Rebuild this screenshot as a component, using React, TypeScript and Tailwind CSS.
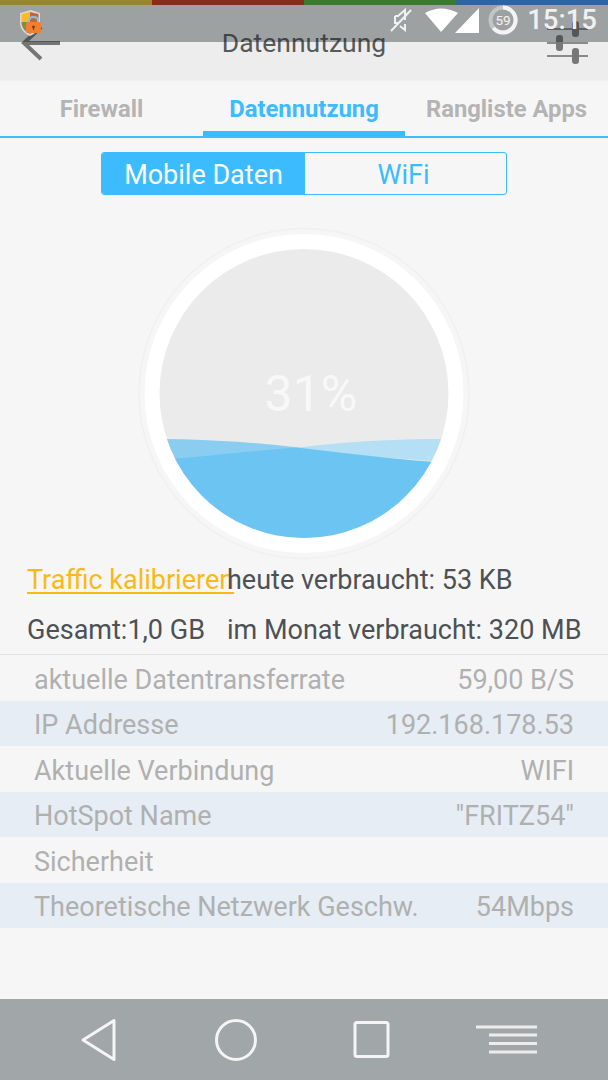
const stats = [
  { label: 'aktuelle Datentransferrate', value: '59,00 B/S' },
  { label: 'IP Addresse', value: '192.168.178.53' },
  { label: 'Aktuelle Verbindung', value: 'WIFI' },
  { label: 'HotSpot Name', value: '"FRITZ54"' },
  { label: 'Sicherheit', value: '' },
  { label: 'Theoretische Netzwerk Geschw.', value: '54Mbps' },
];

function ShieldIcon() {
  return (
    <svg width="26" height="28" viewBox="0 0 26 28">
      <path d="M1 4 L12 1 L21 4 L21 15 Q20 23 11 27 Q2 23 1 15 Z" fill="#d8dadb" />
      <path d="M2.5 5 L11 3 L11 13 L2.5 13 Z" fill="#fdb92c" />
      <path d="M11 3 L19.5 5 L19.5 13 L11 13 Z" fill="#c8643a" />
      <path d="M2.5 13 L11 13 L11 25 Q4 22 2.5 15 Z" fill="#7c8f45" />
      <path d="M11 13 L19.5 13 L19.5 15 Q18 22 11 25 Z" fill="#b8763a" />
      <path d="M10 15 V12 Q10 8 14.5 8 Q19 8 19 12 V15" fill="none" stroke="#7ec3e8" strokeWidth="2" />
      <rect x="7" y="13" width="15" height="11" rx="1.5" fill="#ef7f33" />
      <circle cx="14.5" cy="18" r="1.4" fill="#7a3d14" />
      <rect x="14" y="18" width="1" height="3" fill="#7a3d14" />
    </svg>
  );
}

function StatusBar() {
  return (
    <div className="absolute inset-x-0 top-0 h-[42px] bg-[rgba(22,32,36,0.37)]">
      <div className="flex h-[5px]">
        <div className="flex-1 bg-[#95862f]" />
        <div className="flex-1 bg-[#852d1c]" />
        <div className="flex-1 bg-[#3c7a30]" />
        <div className="flex-1 bg-[#2e659c]" />
      </div>
      <div className="absolute left-[19px] top-[9px]">
        <ShieldIcon />
      </div>
      <div className="absolute right-[11px] top-[5px] flex h-[30px] items-center">
        <svg width="22" height="24" viewBox="0 0 22 24" className="mr-[12px]">
          <path d="M5 8 H8 L15 2 V12 M15 16 V22 L10 18" fill="none" stroke="#f2f2f2" strokeWidth="2" />
          <path d="M5 8 V15 H8" fill="none" stroke="#f2f2f2" strokeWidth="2" />
          <path d="M1 23 L21 2" stroke="#f2f2f2" strokeWidth="2" />
        </svg>
        <svg width="56" height="26" viewBox="0 0 56 26" className="mr-[8px]">
          <path d="M1 6 Q17 -3 34 6 L17 25 Z" fill="#ffffff" />
          <path d="M31 26 H55 V1 Z" fill="#ffffff" />
        </svg>
        <svg width="30" height="30" viewBox="0 0 30 30" className="mr-[9px]">
          <circle cx="15" cy="15" r="12.5" fill="none" stroke="#c3c6c7" strokeWidth="4" />
          <path d="M15 2.5 A12.5 12.5 0 1 1 5.5 23" fill="none" stroke="#f4f4f4" strokeWidth="4" />
          <text x="15" y="20" textAnchor="middle" fontSize="13.5" fill="#f4f4f4" fontFamily="Roboto, sans-serif">
            59
          </text>
        </svg>
        <span className="font-['Roboto',sans-serif] text-[27.5px] leading-none font-medium text-[#f0f0f0]">15:15</span>
      </div>
    </div>
  );
}

function Header() {
  return (
    <div className="relative flex h-[81px] items-start justify-center border-b border-[#f0f0f0] bg-[#ededed]">
      <svg width="44" height="40" viewBox="0 0 44 40" className="absolute left-[20px] top-[23px]">
        <path d="M40 20 H4 M21 4 L4 20 L21 36" fill="none" stroke="#757575" strokeWidth="4" />
      </svg>
      <span className="mt-[27px] font-['Roboto',sans-serif] text-[26.5px] leading-[32px] text-[#58595b]">Datennutzung</span>
      <svg width="44" height="44" viewBox="0 0 44 44" className="absolute left-[546px] top-[20px]">
        <path d="M1 9 H42 M1 23 H42 M1 36 H42" stroke="#8a8a8a" strokeWidth="2" />
        <rect x="26" y="1" width="7" height="16" rx="3" fill="#787878" />
        <rect x="10" y="15" width="7" height="16" rx="3" fill="#787878" />
        <rect x="26" y="28" width="7" height="16" rx="3" fill="#787878" />
      </svg>
      <StatusBar />
    </div>
  );
}

function Tabs() {
  return (
    <div className="flex h-[57px] border-b-2 border-[#3dbbff] font-['Roboto',sans-serif] text-[23.8px] font-bold text-[#b4b4b4]">
      <div className="flex w-[203px] items-center justify-center pt-[2px]">Firewall</div>
      <div className="-mb-[2px] flex w-[202px] items-center justify-center border-b-[7px] border-[#3dbbff] pt-[7px] text-[#3dbbff]">
        Datennutzung
      </div>
      <div className="flex w-[203px] items-center justify-center pt-[2px]">Rangliste Apps</div>
    </div>
  );
}

function Segmented() {
  return (
    <div className="mx-[101px] mt-[14px] flex h-[43px] overflow-hidden rounded-[3px] border border-[#3dbbff] pt-0 font-['Roboto',sans-serif] text-[27px] leading-none">
      <div className="flex w-[203px] items-center justify-center bg-[#3dbbff] pt-[3px] text-white">Mobile Daten</div>
      <div className="flex flex-1 items-center justify-center pt-[3px] pr-[4px] text-[#3dbbff]">WiFi</div>
    </div>
  );
}

function Gauge() {
  return (
    <div className="relative mx-auto mt-[33px] h-[332px] w-[332px]">
      <svg width="332" height="332" viewBox="138 227 332 332">
        <defs>
          <clipPath id="inner">
            <circle cx="304" cy="392.5" r="144.5" />
          </clipPath>
        </defs>
        <circle cx="304" cy="392.5" r="165" fill="#f6f6f6" stroke="#f0f0f0" strokeWidth="1.5" />
        <circle cx="304" cy="392.5" r="159.5" fill="#ffffff" />
        <circle cx="304" cy="392.5" r="144.5" fill="#ebebeb" />
        <g clipPath="url(#inner)">
          <path d="M150 438 C200 437.5 250 441 298 446.5 L298 450 L150 462 Z" fill="#8acdf0" />
          <path d="M298 446.5 C350 440 400 437.5 460 438 L460 462 L298 450 Z" fill="#b5dff5" />
          <path d="M150 460 C200 456 250 450 297 446.5 C345 452 390 458 460 463 L460 550 L150 550 Z" fill="#6cc4f3" />
        </g>
      </svg>
      <span className="absolute inset-x-0 top-[136px] pl-[14px] text-center font-['Roboto',sans-serif] text-[50px] leading-[60px] font-normal text-[#f8f8f8]">
        31%
      </span>
    </div>
  );
}

function Usage() {
  return (
    <div className="font-['Roboto',sans-serif] text-[27px] leading-[50px] text-[#4d5155]">
      <div className="mt-[-5px] flex pl-[27px]">
        <span className="w-[200px] whitespace-nowrap text-[#fdb913] [text-decoration-line:underline] [text-underline-offset:3px]">
          Traffic kalibrieren
        </span>
        <span className="whitespace-nowrap">heute verbraucht: 53 KB</span>
      </div>
      <div className="flex h-[49px] pl-[27px]">
        <span className="w-[200px] whitespace-nowrap">Gesamt:1,0 GB</span>
        <span className="whitespace-nowrap">im Monat verbraucht: 320 MB</span>
      </div>
    </div>
  );
}

function StatRows() {
  return (
    <div className="border-t border-[#dfe4e4] font-['Roboto',sans-serif] text-[27px] text-[#b0b0b0]">
      {stats.map((row, i) => (
        <div
          key={row.label}
          className={`flex h-[45.5px] items-center justify-between pt-[4px] pr-[34px] pl-[34px] whitespace-nowrap ${i % 2 === 1 ? 'bg-[#e6edf4]' : ''}`}
        >
          <span>{row.label}</span>
          <span>{row.value}</span>
        </div>
      ))}
    </div>
  );
}

function NavBar() {
  return (
    <div className="mt-auto flex h-[81px] items-center bg-[#a1a6a8]">
      <svg width="38" height="44" viewBox="0 0 38 44" className="ml-[80px]">
        <path d="M3 22 L34 2.5 V41.5 Z" fill="none" stroke="#f5f5f5" strokeWidth="3" strokeLinejoin="round" />
      </svg>
      <svg width="46" height="46" viewBox="0 0 46 46" className="ml-[95px]">
        <circle cx="23" cy="23" r="19.5" fill="none" stroke="#f5f5f5" strokeWidth="3" />
      </svg>
      <svg width="41" height="41" viewBox="0 0 41 41" className="ml-[92px]">
        <rect x="4" y="3.5" width="33" height="34" rx="2" fill="none" stroke="#f5f5f5" strokeWidth="3" />
      </svg>
      <svg width="62" height="30" viewBox="0 0 62 30" className="ml-[84px]">
        <path d="M0 2 H61 M13 10 H61 M13 18.5 H61 M13 27 H61" stroke="#ededed" strokeWidth="3" />
      </svg>
    </div>
  );
}

export default function App() {
  return (
    <div className="flex h-[1080px] w-[608px] flex-col overflow-hidden bg-[#f6f6f6]">
      <Header />
      <Tabs />
      <Segmented />
      <Gauge />
      <Usage />
      <StatRows />
      <NavBar />
    </div>
  );
}
